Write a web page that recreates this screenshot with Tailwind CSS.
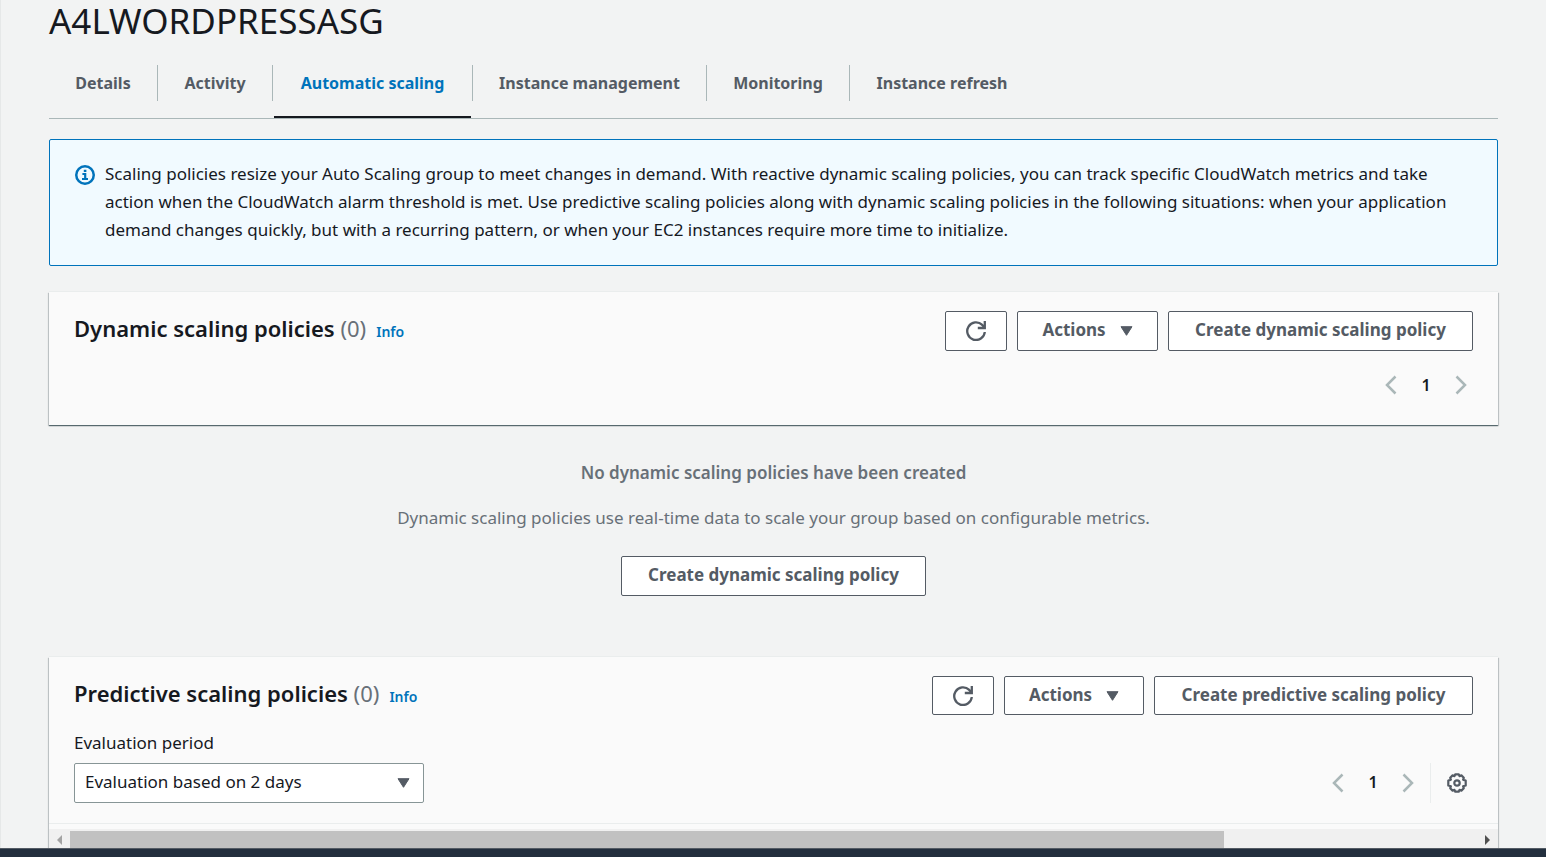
<!DOCTYPE html>
<html lang="en">
<head>
<meta charset="utf-8">
<meta name="viewport" content="width=device-width, initial-scale=1">
<title>A4LWORDPRESSASG</title>
<script src="https://cdn.jsdelivr.net/npm/@tailwindcss/browser@4"></script>
</head>
<body class="flex h-screen flex-col overflow-hidden bg-[#f2f3f3] font-['Noto_Sans',sans-serif] text-[17px] text-[#16191f]">
<svg class="hidden" aria-hidden="true">
  <symbol id="refresh" viewBox="0 0 20 20"><path d="M18.800 11a8.800 8.800 0 1 1-2.600-7.100L18 6" fill="none" stroke="currentColor" stroke-width="2.300"/><path d="M18.800 0v7h-7" fill="none" stroke="currentColor" stroke-width="2.300"/></symbol>
  <symbol id="caret" viewBox="0 0 13 10"><path d="M1 .7h11L6.500 9.300z" fill="currentColor" stroke="currentColor" stroke-linejoin="round"/></symbol>
  <symbol id="prev" viewBox="0 0 12 20"><path d="M10.500 1.500 2 10l8.500 8.500" fill="none" stroke="currentColor" stroke-width="2.500"/></symbol>
  <symbol id="next" viewBox="0 0 12 20"><path d="M1.500 1.500 10 10l-8.500 8.500" fill="none" stroke="currentColor" stroke-width="2.500"/></symbol>
</svg>

<main class="min-h-0 flex-1 overflow-hidden border-l border-[#e6e8e8] pr-12 pl-12">
  <h1 class="text-[35px] leading-[42px]">A4LWORDPRESSASG</h1>

  <nav class="mt-[23px] flex h-[54px] border-b border-[#aab7b8] text-base font-bold text-[#545b64]" aria-label="Group sections">
    <a href="#" class="flex h-9 w-[109px] items-center justify-center border-r border-[#aab7b8]">Details</a>
    <a href="#" class="flex h-9 w-[115px] items-center justify-center border-r border-[#aab7b8]">Activity</a>
    <a href="#" aria-current="page" class="relative flex h-9 w-[200px] items-center justify-center border-r border-[#aab7b8] text-[#0073bb]">Automatic scaling<span class="absolute top-[51px] right-px left-px h-0.5 bg-[#16191f]"></span></a>
    <a href="#" class="flex h-9 w-[234px] items-center justify-center border-r border-[#aab7b8]">Instance management</a>
    <a href="#" class="flex h-9 w-[143px] items-center justify-center border-r border-[#aab7b8]">Monitoring</a>
    <a href="#" class="flex h-9 w-[184px] items-center justify-center">Instance refresh</a>
  </nav>

  <section class="mt-5 flex gap-2.5 rounded-xs border border-[#0073bb] bg-[#f1faff] px-[25px] pt-5 pb-[21px]">
    <svg class="mt-[5px] h-5 w-5 shrink-0 text-[#0073bb]" viewBox="0 0 20 20" fill="none" stroke="currentColor" aria-hidden="true"><circle cx="10" cy="10" r="8.750" stroke-width="2.500"/><path d="M8.800 5.900h2.600M7.400 9h2.800v5M7 14h6" stroke-width="2.200"/></svg>
    <p class="leading-7">
      <span class="block">Scaling policies resize your Auto Scaling group to meet changes in demand. With reactive dynamic scaling policies, you can track specific CloudWatch metrics and take</span>
      <span class="block">action when the CloudWatch alarm threshold is met. Use predictive scaling policies along with dynamic scaling policies in the following situations: when your application</span>
      <span class="block">demand changes quickly, but with a recurring pattern, or when your EC2 instances require more time to initialize.</span>
    </p>
  </section>

  <section class="mt-[26px] h-[133px] bg-[#fafafa] px-[25px] pt-[19px] shadow-[0_1px_1px_0_#001c2480,1px_1px_1px_0_#001c2426,-1px_1px_1px_0_#001c2426,0_-1px_0_0_#eaeded]">
    <div class="flex h-10 justify-between">
      <div class="flex h-9 items-baseline">
        <h2 class="text-[22px] leading-[34px] font-semibold">Dynamic scaling policies <span class="font-normal text-[#687078]">(0)</span></h2>
        <a href="#" class="ml-2.5 text-sm font-semibold text-[#0073bb]">Info</a>
      </div>
      <div class="flex gap-2.5 font-bold text-[#545b64]">
        <button aria-label="Refresh" class="flex w-[62px] items-center justify-center rounded-xs border border-[#545b64] bg-white"><svg class="h-5 w-5"><use href="#refresh"/></svg></button>
        <button class="flex w-[141px] items-center justify-center gap-3.5 rounded-xs border border-[#545b64] bg-white pb-0.5">Actions<svg class="mt-0.5 h-2.5 w-[13px]"><use href="#caret"/></svg></button>
        <button class="w-[305px] rounded-xs border border-[#545b64] bg-white pb-0.5">Create dynamic scaling policy</button>
      </div>
    </div>
    <div class="mt-6 flex items-center justify-end pr-1.5">
      <button aria-label="Previous page" class="text-[#aab7b8]"><svg class="h-5 w-3"><use href="#prev"/></svg></button>
      <button class="w-[58px] text-base leading-5 font-semibold">1</button>
      <button aria-label="Next page" class="text-[#aab7b8]"><svg class="h-5 w-3"><use href="#next"/></svg></button>
    </div>
  </section>

  <section class="flex h-[232px] flex-col items-center pt-9 text-[#687078]">
    <p class="leading-6 font-semibold">No dynamic scaling policies have been created</p>
    <p class="mt-[21px] leading-6">Dynamic scaling policies use real-time data to scale your group based on configurable metrics.</p>
    <button class="mt-[26px] h-10 w-[305px] rounded-xs border border-[#545b64] bg-white pb-0.5 font-bold text-[#545b64]">Create dynamic scaling policy</button>
  </section>

  <section class="bg-[#fafafa] pt-[19px] shadow-[0_1px_1px_0_#001c2480,1px_1px_1px_0_#001c2426,-1px_1px_1px_0_#001c2426,0_-1px_0_0_#eaeded]">
    <div class="flex h-[39px] justify-between px-[25px]">
      <div class="flex h-9 items-baseline">
        <h2 class="text-[22px] leading-[34px] font-semibold">Predictive scaling policies <span class="font-normal text-[#687078]">(0)</span></h2>
        <a href="#" class="ml-2.5 text-sm font-semibold text-[#0073bb]">Info</a>
      </div>
      <div class="flex gap-2.5 font-bold text-[#545b64]">
        <button aria-label="Refresh" class="flex w-[62px] items-center justify-center rounded-xs border border-[#545b64] bg-white"><svg class="h-5 w-5"><use href="#refresh"/></svg></button>
        <button class="flex w-[140px] items-center justify-center gap-3.5 rounded-xs border border-[#545b64] bg-white pb-0.5">Actions<svg class="mt-0.5 h-2.5 w-[13px]"><use href="#caret"/></svg></button>
        <button class="w-[319px] rounded-xs border border-[#545b64] bg-white pb-0.5">Create predictive scaling policy</button>
      </div>
    </div>
    <div class="mt-4 flex items-end justify-between border-b border-[#eaeded] px-[25px] pb-5">
      <div>
        <label for="period" class="block leading-6">Evaluation period</label>
        <div class="relative mt-2 w-[350px]">
          <select id="period" class="block h-10 w-full appearance-none rounded-xs border border-[#879596] bg-white px-2.5 pb-0.5"><option>Evaluation based on 2 days</option></select>
          <svg class="pointer-events-none absolute top-[15px] right-3.5 h-2.5 w-[13px] text-[#545b64]"><use href="#caret"/></svg>
        </div>
      </div>
      <div class="flex h-10 items-center">
        <button aria-label="Previous page" class="text-[#aab7b8]"><svg class="h-5 w-3"><use href="#prev"/></svg></button>
        <button class="w-[58px] pb-0.5 text-base leading-5 font-semibold">1</button>
        <button aria-label="Next page" class="text-[#aab7b8]"><svg class="h-5 w-3"><use href="#next"/></svg></button>
        <div class="ml-4 flex h-10 items-center border-l border-[#eaeded] pr-1.5 pl-4">
          <button aria-label="Preferences" class="text-[#545b64]"><svg class="block h-5 w-5" viewBox="0 0 20 20" fill="none" stroke="currentColor" stroke-width="2.200"><path d="M8.300 1.300h3.400l.8 1.800 1.900-.7 2.400 2.400-.7 1.900 2.600.9v4.800l-2.600.9.7 1.900-2.400 2.400-1.900-.7-.8 1.800H8.300l-.8-1.800-1.900.7-2.400-2.400.7-1.900-2.600-.9V7.600l2.600-.9-.7-1.900 2.400-2.400 1.900.7z" stroke-linejoin="round"/><circle cx="10" cy="10" r="2.700"/></svg></button>
        </div>
      </div>
    </div>
    <div class="mt-[5px] flex h-[21px] bg-[#f0f0f0]">
      <button aria-label="Scroll left" class="flex w-[21px] items-center justify-center text-[#a3a3a3]"><svg class="h-2.5 w-[5px]" viewBox="0 0 5 10"><path d="M5 0v10L0 5z" fill="currentColor"/></svg></button>
      <div class="flex-1 pt-0.5"><div class="h-full w-[82%] bg-[#c1c1c1]"></div></div>
      <button aria-label="Scroll right" class="flex w-[21px] items-center justify-center text-[#505050]"><svg class="h-2.5 w-[5px]" viewBox="0 0 5 10"><path d="M0 0v10l5-5z" fill="currentColor"/></svg></button>
    </div>
  </section>
</main>
<footer class="h-[9px] shrink-0 border-t border-[#545b64] bg-[#232f3e]"></footer>
</body>
</html>
